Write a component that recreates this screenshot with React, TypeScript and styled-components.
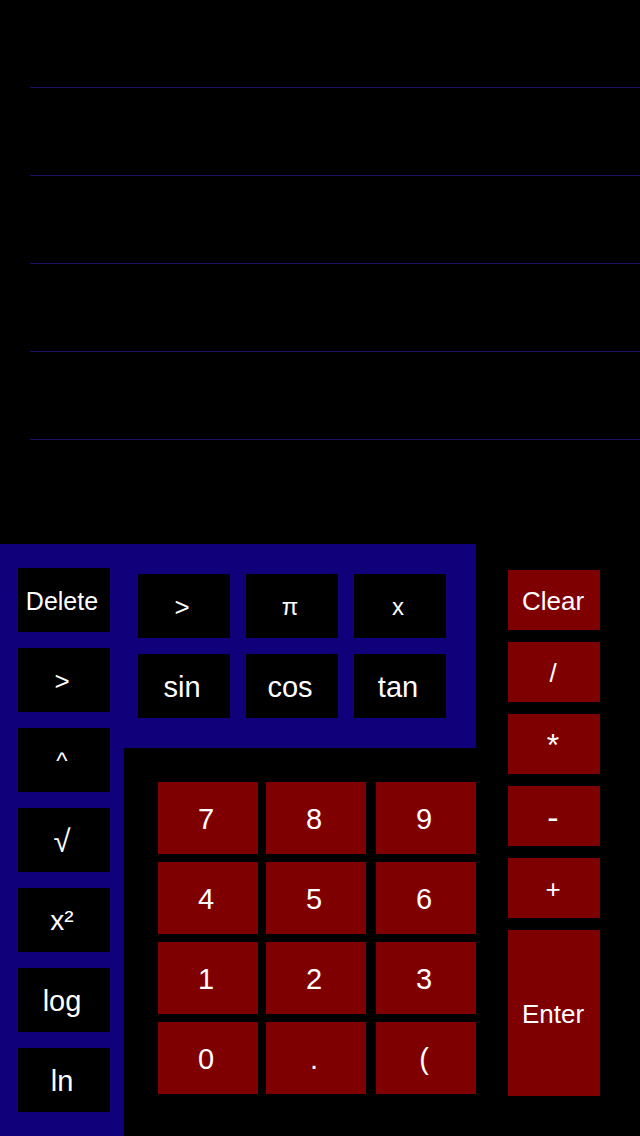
import React from "react";
import styled, { createGlobalStyle } from "styled-components";

const Global = createGlobalStyle`
  html, body { margin: 0; padding: 0; background: #000; }
  body { font-family: "Liberation Sans", Arial, Helvetica, sans-serif; }
  * { box-sizing: border-box; }
`;

const BLUE = "#10007a";
const RED = "#7f0000";

const Screen = styled.div`
  width: 640px;
  height: 1136px;
  background: #000;
  display: flex;
  flex-direction: column;
  overflow: hidden;
`;

const Display = styled.div`
  height: 544px;
  display: flex;
  flex-direction: column;
  padding-left: 30px;
`;

const DisplayLine = styled.div`
  height: 88px;
  border-bottom: 1px solid #1a1260;
`;

const Keypad = styled.div`
  flex: 1;
  display: flex;
`;

const BluePanel = styled.div`
  width: 476px;
  background: ${BLUE};
  display: flex;
`;

const LeftColumn = styled.div`
  width: 124px;
  padding: 24px 14px 0 18px;
  display: flex;
  flex-direction: column;
  gap: 16px;
`;

const MainArea = styled.div`
  width: 352px;
  display: flex;
  flex-direction: column;
`;

const FuncGrid = styled.div`
  height: 204px;
  padding: 30px 0 0 14px;
  display: grid;
  grid-template-columns: repeat(3, 92px);
  grid-auto-rows: 64px;
  column-gap: 16px;
  row-gap: 16px;
  align-content: start;
`;

const NumArea = styled.div`
  flex: 1;
  background: #000;
  padding: 34px 0 0 34px;
  display: grid;
  grid-template-columns: 100px 100px 100px;
  grid-auto-rows: 72px;
  row-gap: 8px;
  align-content: start;
`;

const RightColumn = styled.div`
  flex: 1;
  padding: 26px 0 0 32px;
  display: flex;
  flex-direction: column;
  gap: 12px;
`;

const Key = styled.button<{
  $bg: string;
  $w?: number;
  $h: number;
  $size?: number;
  $ml?: number;
  $shift?: number;
}>`
  appearance: none;
  border: none;
  margin: 0;
  margin-left: ${(p) => p.$ml ?? 0}px;
  padding: 2px ${(p) => p.$shift ?? 4}px 0 0;
  width: ${(p) => (p.$w ? `${p.$w}px` : "auto")};
  height: ${(p) => p.$h}px;
  background: ${(p) => p.$bg};
  color: #fff;
  font-family: "Liberation Sans", Arial, Helvetica, sans-serif;
  font-size: ${(p) => p.$size ?? 26}px;
  line-height: 1;
  display: flex;
  align-items: center;
  justify-content: center;
  flex-shrink: 0;
`;

const leftKeys: { label: string; size: number }[] = [
  { label: "Delete", size: 25 },
  { label: ">", size: 26 },
  { label: "^", size: 24 },
  { label: "√", size: 31 },
  { label: "x²", size: 28 },
  { label: "log", size: 29 },
  { label: "ln", size: 29 },
];

const funcKeys: { label: string; size: number }[] = [
  { label: ">", size: 26 },
  { label: "π", size: 24 },
  { label: "x", size: 24 },
  { label: "sin", size: 29 },
  { label: "cos", size: 29 },
  { label: "tan", size: 29 },
];

const numKeys = ["7", "8", "9", "4", "5", "6", "1", "2", "3", "0", ".", "("];

const opKeys: { label: string; size: number }[] = [
  { label: "Clear", size: 26 },
  { label: "/", size: 26 },
  { label: "*", size: 32 },
  { label: "-", size: 34 },
  { label: "+", size: 26 },
];

export default function App() {
  return (
    <>
      <Global />
      <Screen>
        <Display>
          {[0, 1, 2, 3, 4].map((i) => (
            <DisplayLine key={i} />
          ))}
        </Display>
        <Keypad>
          <BluePanel>
            <LeftColumn>
              {leftKeys.map((k, i) => (
                <Key key={i} $bg="#000" $w={92} $h={64} $size={k.size}>
                  {k.label}
                </Key>
              ))}
            </LeftColumn>
            <MainArea>
              <FuncGrid>
                {funcKeys.map((k, i) => (
                  <Key key={i} $bg="#000" $h={64} $size={k.size}>
                    {k.label}
                  </Key>
                ))}
              </FuncGrid>
              <NumArea>
                {numKeys.map((n, i) => (
                  <Key
                    key={i}
                    $bg={RED}
                    $w={100}
                    $h={72}
                    $size={29}
                    $ml={i % 3 === 1 ? 8 : i % 3 === 2 ? 18 : 0}
                  >
                    {n}
                  </Key>
                ))}
              </NumArea>
            </MainArea>
          </BluePanel>
          <RightColumn>
            {opKeys.map((k, i) => (
              <Key key={i} $bg={RED} $w={92} $h={60} $size={k.size} $shift={2}>
                {k.label}
              </Key>
            ))}
            <Key $bg={RED} $w={92} $h={166} $size={26} $shift={2}>
              Enter
            </Key>
          </RightColumn>
        </Keypad>
      </Screen>
    </>
  );
}
